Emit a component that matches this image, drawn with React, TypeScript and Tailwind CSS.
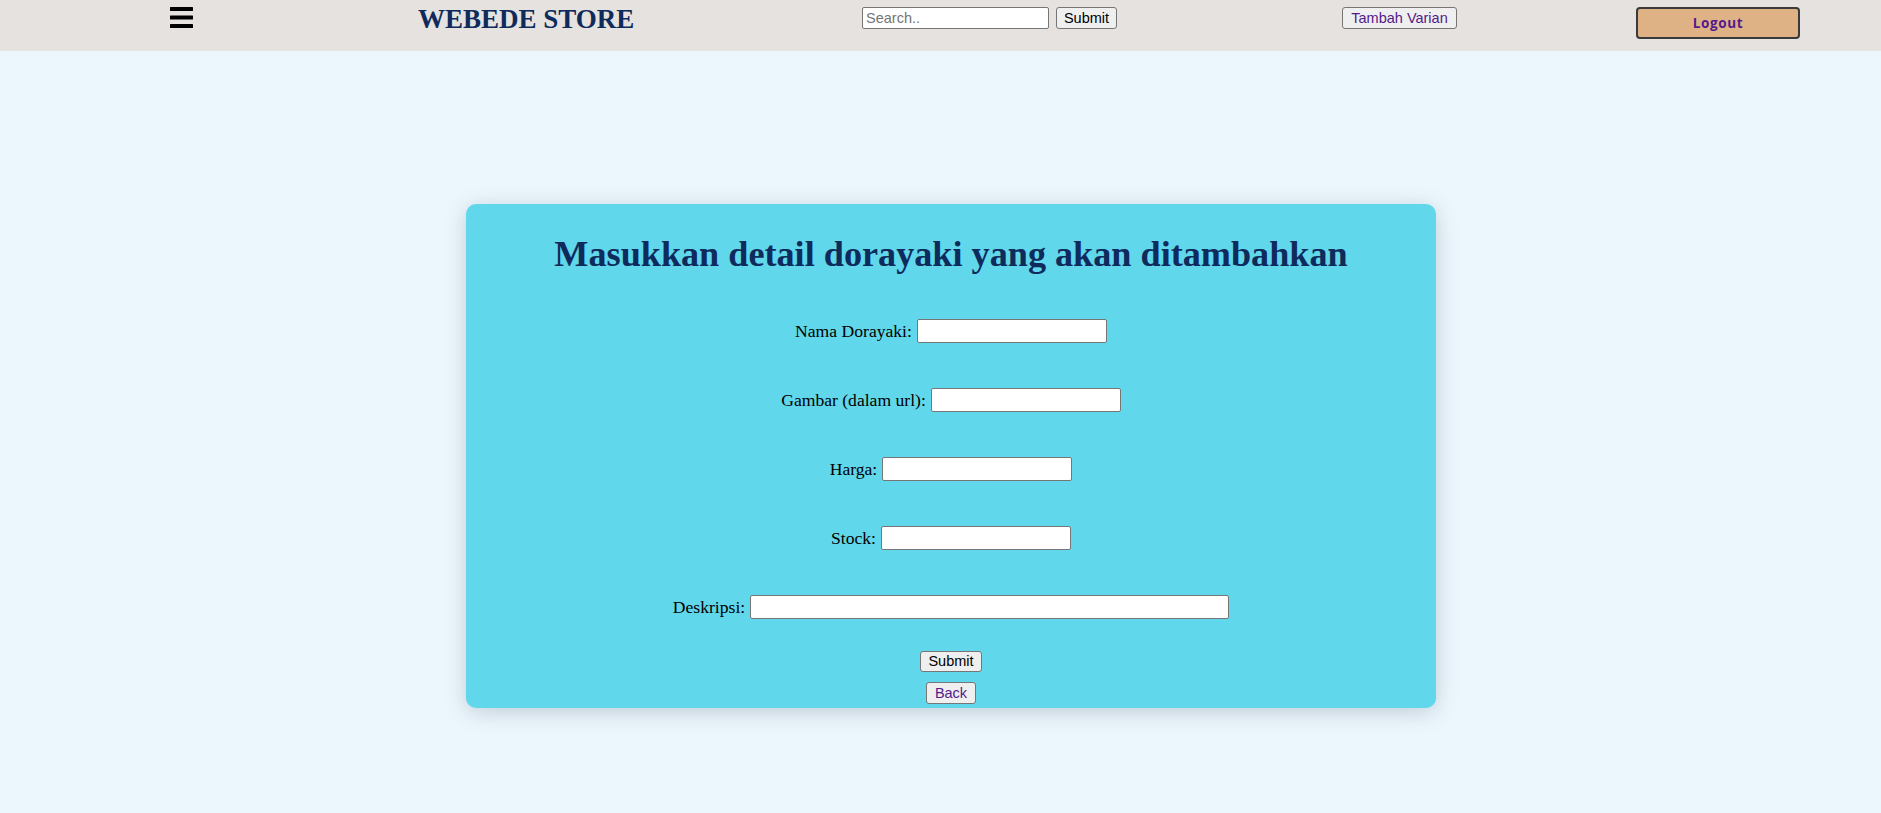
import React from 'react';

const serif = { fontFamily: '"Liberation Serif", "Times New Roman", serif' };
const sans = { fontFamily: '"Liberation Sans", Arial, sans-serif' };

// Baris label + input di form
const Field = ({ label, width = 'w-[190px]' }: { label: string; width?: string }) => (
  <div className="flex items-center h-[24px] text-[17.6px] text-black" style={serif}>
    <span className="mr-[5px] whitespace-nowrap">{label}</span>
    <input
      type="text"
      className={`${width} h-[24px] bg-white border border-[#767676] rounded-[2px] px-[2px] text-[14.5px] outline-none`}
      style={sans}
    />
  </div>
);

const Header = () => (
  <header className="flex items-start h-[51px] pt-[7px] bg-[#e6e2df]">
    <button className="ml-[170px] w-[23px] h-[21px] flex-none" aria-label="menu">
      <svg width="23" height="21" viewBox="0 0 23 21">
        <rect x="0" y="0" width="23" height="4" rx="0.5" fill="#000" />
        <rect x="0" y="8.5" width="23" height="4" rx="0.5" fill="#000" />
        <rect x="0" y="17" width="23" height="4" rx="0.5" fill="#000" />
      </svg>
    </button>

    <div
      className="ml-[225px] w-[217px] -mt-[3px] leading-[31px] text-[27px] font-bold text-[#0e2b5c] whitespace-nowrap flex-none"
      style={serif}
    >
      WEBEDE STORE
    </div>

    <form className="ml-[227px] w-[255px] flex items-start flex-none" style={sans}>
      <input
        type="text"
        placeholder="Search.."
        className="w-[187px] h-[22px] bg-white border border-[#767676] rounded-[2px] px-[3px] text-[14.5px] text-black placeholder:text-[#757575] outline-none"
      />
      <button
        type="button"
        className="ml-[7px] w-[62px] h-[22px] bg-[#efefef] border border-[#767676] rounded-[3px] text-[14.5px] text-black leading-none"
      >
        Submit
      </button>
    </form>

    <button
      className="ml-[225px] w-[115px] h-[22px] bg-[#efefef] border border-[#767676] rounded-[3px] text-[14.5px] text-[#551a8b] leading-none flex-none"
      style={sans}
    >
      Tambah Varian
    </button>

    <button
      className="ml-[179px] w-[164px] h-[32px] bg-[#dfb286] border-2 border-[#3a3a3a] rounded-[4px] text-[13.5px] font-bold tracking-[0.6px] text-[#551a8b] flex-none"
      style={{ fontFamily: '"Open Sans", "Noto Sans", sans-serif' }}
    >
      Logout
    </button>
  </header>
);

export default function App() {
  return (
    <div className="min-h-screen w-full bg-[#ecf7fd]">
      <Header />

      <main className="pt-[153px]">
        <div className="ml-[466px] w-[970px] bg-[#60d7eb] rounded-[10px] shadow-[0_4px_22px_rgba(40,60,80,0.22)] pt-[30px] pb-[4px] flex flex-col items-center">
          <h1 className="text-[36.2px] leading-[41px] font-bold text-[#0e2b5c]" style={serif}>
            Masukkan detail dorayaki yang akan ditambahkan
          </h1>

          <div className="mt-[44px] flex flex-col items-center gap-[45px]">
            <Field label="Nama Dorayaki:" />
            <Field label="Gambar (dalam url):" />
            <Field label="Harga:" />
            <Field label="Stock:" />
            <Field label="Deskripsi:" width="w-[479px]" />
          </div>

          <button
            className="mt-[32px] w-[62px] h-[21px] bg-[#efefef] border border-[#767676] rounded-[3px] text-[14.5px] text-black leading-none"
            style={sans}
          >
            Submit
          </button>
          <button
            className="mt-[10px] w-[50px] h-[22px] bg-[#efefef] border border-[#767676] rounded-[3px] text-[14.5px] text-[#551a8b] leading-none"
            style={sans}
          >
            Back
          </button>
        </div>
      </main>
    </div>
  );
}
